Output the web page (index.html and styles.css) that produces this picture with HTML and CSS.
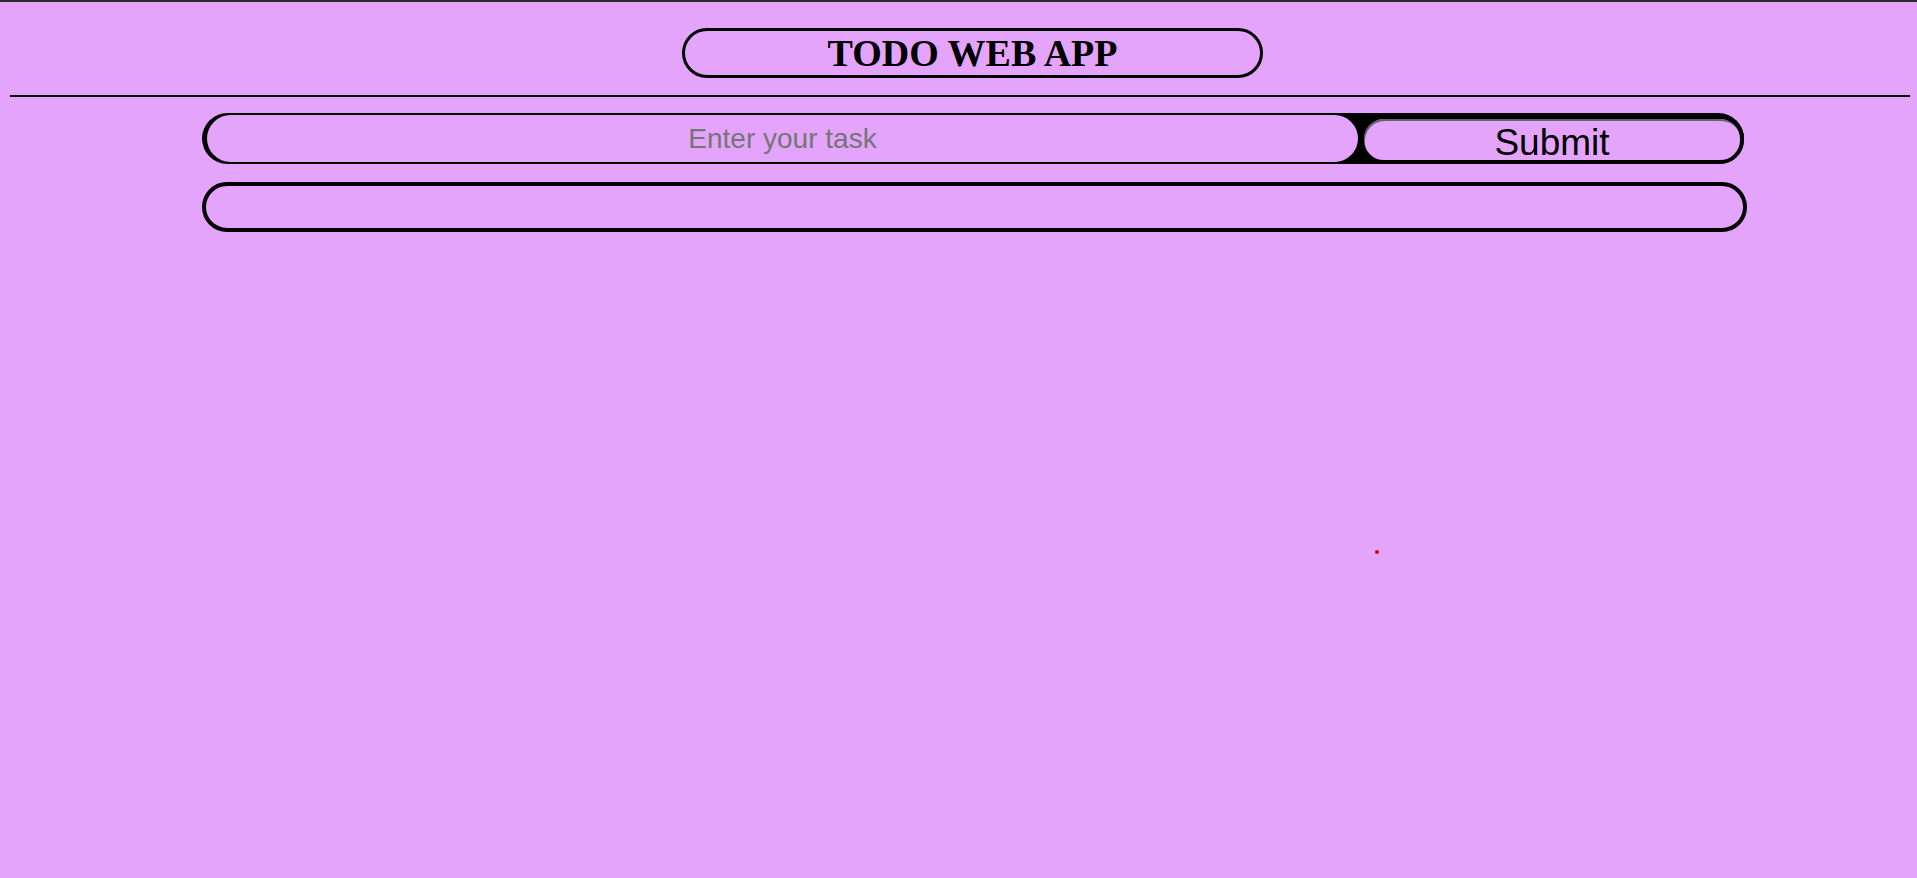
FILE: index.html
```html
<!DOCTYPE html>
<html lang="en">
<head>
<meta charset="utf-8">
<title>TODO WEB APP</title>
<link rel="stylesheet" href="styles.css">
</head>
<body>
<div class="topline"></div>
<header class="header">
  <h1 class="title">TODO WEB APP</h1>
</header>
<hr class="divider">
<main class="main">
  <form class="task-form">
    <input class="task-input" type="text" placeholder="Enter your task">
    <button class="task-submit" type="button">Submit</button>
  </form>
  <ul class="task-list"></ul>
</main>
<span class="dot"></span>
</body>
</html>
```

FILE: styles.css
```css
html, body {
  margin: 0;
  padding: 0;
}
body {
  background: #e4a4fc;
  min-height: 878px;
  position: relative;
  font-family: "Liberation Sans", Arial, sans-serif;
}
.topline {
  height: 2px;
  background: #2b2b2b;
}
.header {
  padding-top: 26px;
  padding-left: 682px;
}
.title {
  box-sizing: border-box;
  width: 581px;
  height: 50px;
  margin: 0;
  border: 3px solid #000;
  border-radius: 25px;
  font-family: "Liberation Serif", "Times New Roman", serif;
  font-weight: bold;
  font-size: 38px;
  line-height: 45px;
  text-align: center;
  color: #000;
}
.divider {
  margin: 17px 7px 0 10px;
  height: 0;
  border: 0;
  border-top: 2px solid #000;
}
.main {
  padding-left: 202px;
  padding-top: 16px;
}
.task-form {
  box-sizing: border-box;
  width: 1542px;
  height: 51px;
  margin: 0;
  background: #000;
  border-radius: 26px;
  display: flex;
  align-items: center;
  padding: 0 0 0 5px;
  gap: 2px;
}
.task-input {
  box-sizing: border-box;
  width: 1151px;
  height: 47px;
  border: 0;
  border-radius: 24px;
  background: #e4a4fc;
  outline: none;
  font-family: "Liberation Sans", Arial, sans-serif;
  font-size: 28px;
  text-align: center;
  padding: 0;
  color: #000;
}
.task-input::placeholder {
  color: #757575;
}
.task-submit {
  box-sizing: border-box;
  width: 384px;
  height: 49px;
  margin-top: 2px;
  border: 4px solid #000;
  border-radius: 24px;
  background: #e4a4fc;
  box-shadow: inset 1px 2px 0 0 #666;
  font-family: "Liberation Sans", Arial, sans-serif;
  font-size: 37px;
  line-height: 1;
  color: #000;
  padding: 5px 0 0 0;
}
.task-list {
  box-sizing: border-box;
  width: 1545px;
  height: 50px;
  margin: 18px 0 0 0;
  padding: 0;
  list-style: none;
  border: 4px solid #000;
  border-radius: 25px;
}
.dot {
  position: absolute;
  left: 1375px;
  top: 550px;
  width: 4px;
  height: 4px;
  border-radius: 50%;
  background: #e00000;
}
```
